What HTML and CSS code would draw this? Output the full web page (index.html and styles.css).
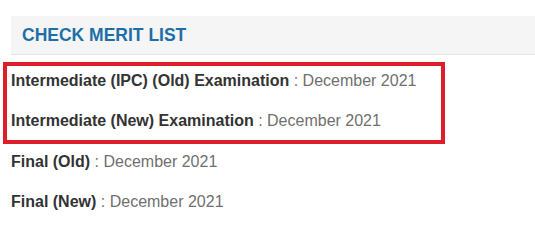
FILE: index.html
```html
<!DOCTYPE html>
<html>
<head>
<meta charset="utf-8">
<link rel="stylesheet" href="styles.css">
</head>
<body>
<div class="page">
  <div class="panel-head"><h2 class="panel-title">CHECK MERIT LIST</h2></div>
  <div class="highlight">
    <p class="row"><span class="label">Intermediate (IPC) (Old) Examination</span><span class="value"> : December 2021</span></p>
    <p class="row"><span class="label">Intermediate (New) Examination</span><span class="value"> : December 2021</span></p>
  </div>
  <div class="rest">
    <p class="row"><span class="label">Final (Old)</span><span class="value"> : December 2021</span></p>
    <p class="row"><span class="label">Final (New)</span><span class="value"> : December 2021</span></p>
  </div>
</div>
</body>
</html>
```
FILE: styles.css
```css
html, body { margin: 0; padding: 0; background: #fff; }
body { font-family: "Liberation Sans", Arial, sans-serif; }
.page { display: flex; flex-direction: column; padding-top: 16px; }
.panel-head {
  margin-left: 11px;
  height: 38px;
  background: #f5f5f5;
  border-bottom: 1px solid #e4e4e4;
  display: flex;
  align-items: center;
  padding-left: 11px;
}
.panel-title {
  margin: 0;
  font-size: 17.5px;
  font-weight: bold;
  color: #1e6ea7;
}
.highlight {
  margin: 7px 0 0 3px;
  width: 430px;
  border: 4px solid #dc1f2b;
  padding: 5px 0 9px 4px;
  display: flex;
  flex-direction: column;
  gap: 20px;
}
.rest {
  margin-top: 8px;
  padding-left: 11px;
  display: flex;
  flex-direction: column;
  gap: 20px;
}
.row { margin: 0; font-size: 16px; line-height: 20px; }
.label { font-weight: bold; color: #333; }
.value { color: #707070; }
```
